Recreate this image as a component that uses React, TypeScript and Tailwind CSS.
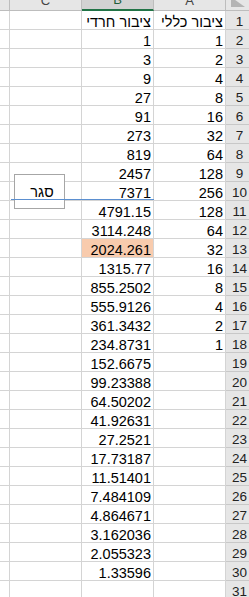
import React from "react";

const colA = [
  "ציבור כללי", "1", "2", "4", "8", "16", "32", "64", "128", "256",
  "128", "64", "32", "16", "8", "4", "2", "1",
];

const colB = [
  "ציבור חרדי", "1", "3", "9", "27", "91", "273", "819", "2457", "7371",
  "4791.15", "3114.248", "2024.261", "1315.77", "855.2502", "555.9126",
  "361.3432", "234.8731", "152.6675", "99.23388", "64.50202", "41.92631",
  "27.2521", "17.73187", "11.51401", "7.484109", "4.864671", "3.162036",
  "2.055323", "1.33596",
];

const rows = Array.from({ length: 31 }, (_, i) => i + 1);

const cellFont = { fontFamily: '"Liberation Sans", Arial, sans-serif' };

const Cell = ({ text, highlight }: { text?: string; highlight?: boolean }) => (
  <div
    className={`h-[19px] border-r border-b border-[#d4d4d4] flex items-end justify-end pr-[2px] overflow-hidden ${
      highlight ? "bg-[#f8cbad]" : "bg-white"
    }`}
  >
    {text && (
      <span dir="rtl" className="text-[14.5px] leading-[14px] text-black whitespace-nowrap">
        {text}
      </span>
    )}
  </div>
);

const ColHead = ({ label, selected }: { label: string; selected?: boolean }) => (
  <div
    className={`h-[11px] border-r flex items-end justify-center overflow-hidden ${
      selected
        ? "bg-[#d2d2d2] border-r-[#bdbdbd] border-b-2 border-b-[#217346]"
        : "bg-[#e6e6e6] border-r-[#bdbdbd] border-b border-b-[#bdbdbd]"
    }`}
  >
    <span
      className={`text-[13px] leading-[10px] mb-[4px] ${selected ? "text-[#1e5e3a]" : "text-[#444]"}`}
    >
      {label}
    </span>
  </div>
);

export default function App() {
  return (
    <div className="relative w-[249px] h-[597px] overflow-hidden bg-white" style={cellFont}>
      <div className="grid grid-cols-[10px_72px_72px_72px_23px]">
        {/* column headers */}
        <ColHead label="" />
        <ColHead label="C" />
        <ColHead label="B" selected />
        <ColHead label="A" />
        <div className="h-[11px] bg-[#e6e6e6] border-b border-[#bdbdbd] flex justify-center">
          <svg width="14" height="10" viewBox="0 0 14 10" className="-mt-[3px] ml-[1px]">
            <polygon points="0,0 0,10 14,10" fill="#b4b4b4" />
          </svg>
        </div>

        {rows.map((r) => (
          <React.Fragment key={r}>
            <Cell />
            <Cell />
            <Cell text={colB[r - 1]} highlight={r === 13} />
            <Cell text={colA[r - 1]} />
            <div className="h-[19px] bg-[#e6e6e6] border-b border-[#c8c8c8] flex items-end justify-center pl-[4px]">
              <span className="text-[13.5px] leading-[14px] text-[#222]">{r}</span>
            </div>
          </React.Fragment>
        ))}
      </div>

      {/* "close" button shape */}
      <div className="absolute left-[14px] top-[174px] w-[51px] h-[35px] border border-[#a6a6a6] bg-white flex items-center justify-center pl-[5px]">
        <span dir="rtl" className="text-[14.5px] leading-[14px] text-black">
          סגר
        </span>
      </div>

      {/* drawn line over the sheet */}
      <div className="absolute left-[11px] top-[199px] w-[143px] h-px bg-[#5b8fd0]" />
    </div>
  );
}
